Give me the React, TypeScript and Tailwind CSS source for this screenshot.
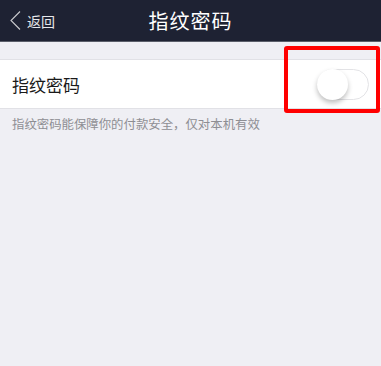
import { useState } from 'react';

export default function App() {
  const [on, setOn] = useState(false);
  return (
    <div
      className="relative h-[366px] w-[381px] overflow-hidden bg-[#efeff4]"
      style={{ fontFamily: '"Noto Sans CJK SC", "Noto Sans", sans-serif' }}
    >
      <div className="relative flex h-[42px] items-center justify-center border-b border-[#5a5e6a] bg-[#1e2233]">
        <div className="absolute left-[10px] top-0 flex h-full items-center gap-[6px] text-[#e6e7ea]">
          <svg width="11" height="19" viewBox="0 0 11 19" fill="none">
            <path d="M10 0.5 L1 9.5 L10 18.5" stroke="#c9cace" strokeWidth="1.1" />
          </svg>
          <span className="text-[14px] leading-none">返回</span>
        </div>
        <h1 className="text-[20px] font-normal leading-none tracking-[1px] text-white">指纹密码</h1>
      </div>

      <div className="mt-[17px] flex h-[50px] items-center justify-between border-y border-[#e1e1e6] bg-white pl-[12px] pr-[12px]">
        <span className="text-[17px] leading-none text-[#1a1a1a]">指纹密码</span>
        <button
          onClick={() => setOn(!on)}
          className={`relative h-[31px] w-[52px] rounded-full border ${on ? 'border-[#4cd964] bg-[#4cd964]' : 'border-[#e3e3e6] bg-white'}`}
        >
          <span
            className={`absolute top-[-1px] h-[31px] w-[31px] rounded-full bg-white shadow-[0_3px_5px_rgba(0,0,0,0.25)] ${on ? 'left-[20px]' : 'left-[-1px]'}`}
          />
        </button>
      </div>

      <p className="mt-[9px] pl-[12px] text-[12.4px] leading-none text-[#8e8e93]">
        指纹密码能保障你的付款安全，仅对本机有效
      </p>

      <div className="pointer-events-none absolute left-[284px] top-[46px] h-[67px] w-[96px] rounded-[3px] border-[4px] border-[#ff0000]" />
    </div>
  );
}
